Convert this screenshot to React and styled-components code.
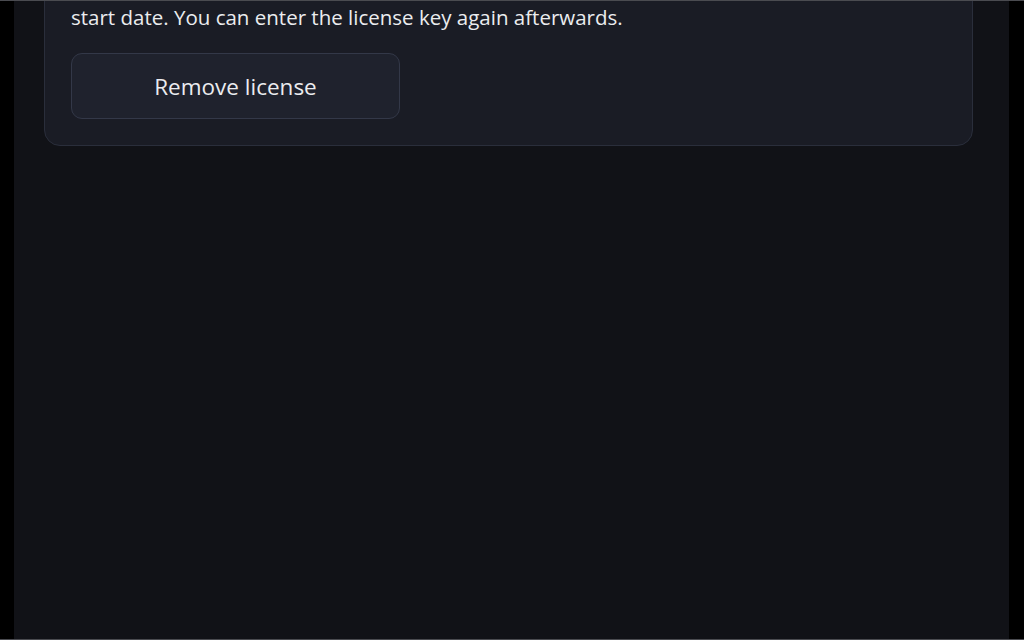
import styled, { createGlobalStyle } from 'styled-components'

const Global = createGlobalStyle`
  html, body {
    margin: 0;
    padding: 0;
    background: #000;
  }
  * { box-sizing: border-box; }
`

const Frame = styled.div`
  width: 1024px;
  height: 640px;
  display: flex;
  background: #000;
  border-top: 1px solid #4a4b50;
  border-bottom: 1px solid #4a4b50;
  padding: 0 15px 0 14px;
  overflow: hidden;
  font-family: 'Open Sans', 'Noto Sans', sans-serif;
`

const Main = styled.main`
  flex: 1;
  background: #111217;
  padding: 0 36px 0 30px;
  overflow: hidden;
`

const Card = styled.section`
  margin-top: -53px;
  background: #1a1c25;
  border: 1px solid #2a2e3b;
  border-radius: 16px;
  padding: 25px 26px 26px;
`

const Desc = styled.p`
  margin: 0;
  color: #ebecef;
  font-size: 20.5px;
  font-weight: 500;
  line-height: 29px;
  white-space: nowrap;
`

const Button = styled.button`
  display: block;
  margin-top: 21px;
  width: 329px;
  height: 66px;
  border-radius: 11px;
  border: 1px solid #333848;
  background: #1f222d;
  color: #ebecef;
  font-family: inherit;
  font-size: 22.5px;
  font-weight: 500;
  cursor: pointer;
`

export default function App() {
  return (
    <>
      <Global />
      <Frame>
        <Main>
          <Card>
            <Desc>
              Removing the license deactivates all Pro features and resets your trial to its remaining
              <br />
              start date. You can enter the license key again afterwards.
            </Desc>
            <Button>Remove license</Button>
          </Card>
        </Main>
      </Frame>
    </>
  )
}
